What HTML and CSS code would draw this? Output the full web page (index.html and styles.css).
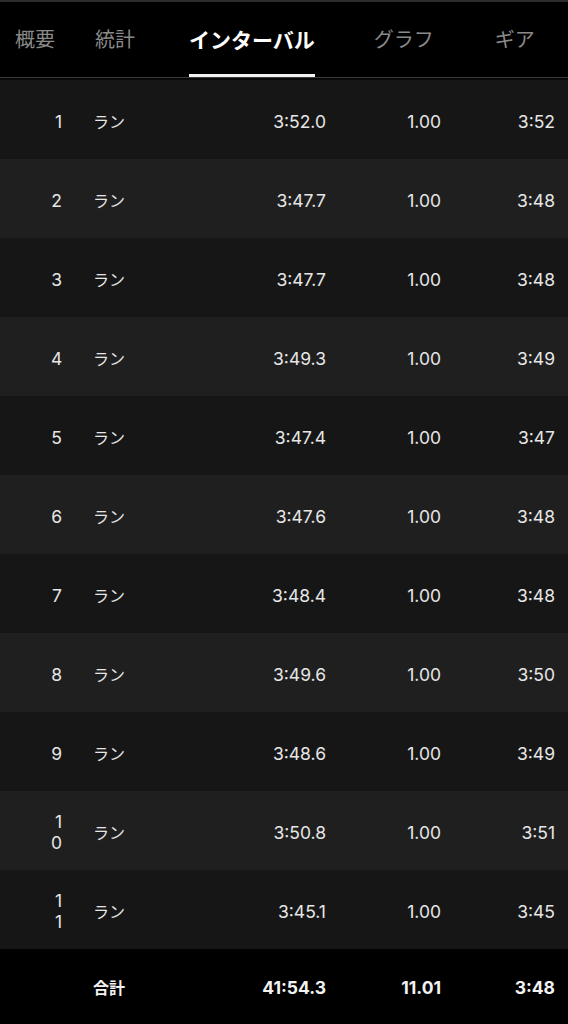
FILE: index.html
```html
<!DOCTYPE html>
<html lang="ja">
<head>
<meta charset="utf-8">
<link rel="stylesheet" href="styles.css">
</head>
<body>
<div class="topline"></div>
<nav class="tabs">
  <div class="tab t1">概要</div>
  <div class="tab t2">統計</div>
  <div class="tab t3 active">インターバル</div>
  <div class="tab t4">グラフ</div>
  <div class="tab t5">ギア</div>
</nav>
<div class="gap"></div>
<div class="list">
  <div class="row"><div class="num"><span>1</span></div><div class="name">ラン</div><div class="val">3:52.0</div><div class="val">1.00</div><div class="val">3:52</div></div>
  <div class="row"><div class="num"><span>2</span></div><div class="name">ラン</div><div class="val">3:47.7</div><div class="val">1.00</div><div class="val">3:48</div></div>
  <div class="row"><div class="num"><span>3</span></div><div class="name">ラン</div><div class="val">3:47.7</div><div class="val">1.00</div><div class="val">3:48</div></div>
  <div class="row"><div class="num"><span>4</span></div><div class="name">ラン</div><div class="val">3:49.3</div><div class="val">1.00</div><div class="val">3:49</div></div>
  <div class="row"><div class="num"><span>5</span></div><div class="name">ラン</div><div class="val">3:47.4</div><div class="val">1.00</div><div class="val">3:47</div></div>
  <div class="row"><div class="num"><span>6</span></div><div class="name">ラン</div><div class="val">3:47.6</div><div class="val">1.00</div><div class="val">3:48</div></div>
  <div class="row"><div class="num"><span>7</span></div><div class="name">ラン</div><div class="val">3:48.4</div><div class="val">1.00</div><div class="val">3:48</div></div>
  <div class="row"><div class="num"><span>8</span></div><div class="name">ラン</div><div class="val">3:49.6</div><div class="val">1.00</div><div class="val">3:50</div></div>
  <div class="row"><div class="num"><span>9</span></div><div class="name">ラン</div><div class="val">3:48.6</div><div class="val">1.00</div><div class="val">3:49</div></div>
  <div class="row"><div class="num"><span>10</span></div><div class="name">ラン</div><div class="val">3:50.8</div><div class="val">1.00</div><div class="val">3:51</div></div>
  <div class="row"><div class="num"><span>11</span></div><div class="name">ラン</div><div class="val">3:45.1</div><div class="val">1.00</div><div class="val">3:45</div></div>
  <div class="row total"><div class="num"></div><div class="name">合計</div><div class="val">41:54.3</div><div class="val">11.01</div><div class="val">3:48</div></div>
</div>
</body>
</html>
```
FILE: styles.css
```css
html, body {
  margin: 0;
  padding: 0;
  background: #000;
  font-family: Inter, "Noto Sans CJK JP", sans-serif;
  color: #e6e6e6;
}
.topline {
  height: 2px;
  background: #2c2c2c;
}
.tabs {
  display: flex;
  height: 75px;
  border-bottom: 1px solid #3a3a3a;
  font-family: "Noto Sans CJK JP", sans-serif;
}
.tab {
  display: flex;
  align-items: center;
  font-size: 20px;
  color: #8a8a8a;
  padding-top: 1px;
  border-bottom: 3px solid transparent;
  box-sizing: border-box;
}
.t1 { margin-left: 15px; }
.t2 { margin-left: 40px; }
.t3 { margin-left: 54px; }
.t4 { margin-left: 59px; }
.t5 { margin-left: 61px; }
.tab.active {
  color: #fff;
  font-weight: bold;
  font-size: 21px;
  border-bottom-color: #f2f2f2;
}
.gap {
  height: 2px;
  background: #080808;
}
.row {
  display: grid;
  grid-template-columns: 62px 138px 126px 115px 114px;
  align-items: center;
  height: 79px;
  padding-top: 3px;
  box-sizing: border-box;
  font-size: 17.5px;
  background: #161616;
}
.row:nth-child(even) {
  background: #1f1f1f;
}
.num {
  text-align: right;
}
.num span {
  display: inline-block;
  width: 11px;
  word-break: break-all;
  text-align: right;
  line-height: 21px;
}
.name {
  padding-left: 31px;
  font-family: "Noto Sans CJK JP", sans-serif;
  font-size: 16px;
}
.val {
  text-align: right;
}
.row.total {
  background: #000;
  height: 75px;
  padding-top: 1px;
  font-weight: 700;
  color: #f2f2f2;
}
```
